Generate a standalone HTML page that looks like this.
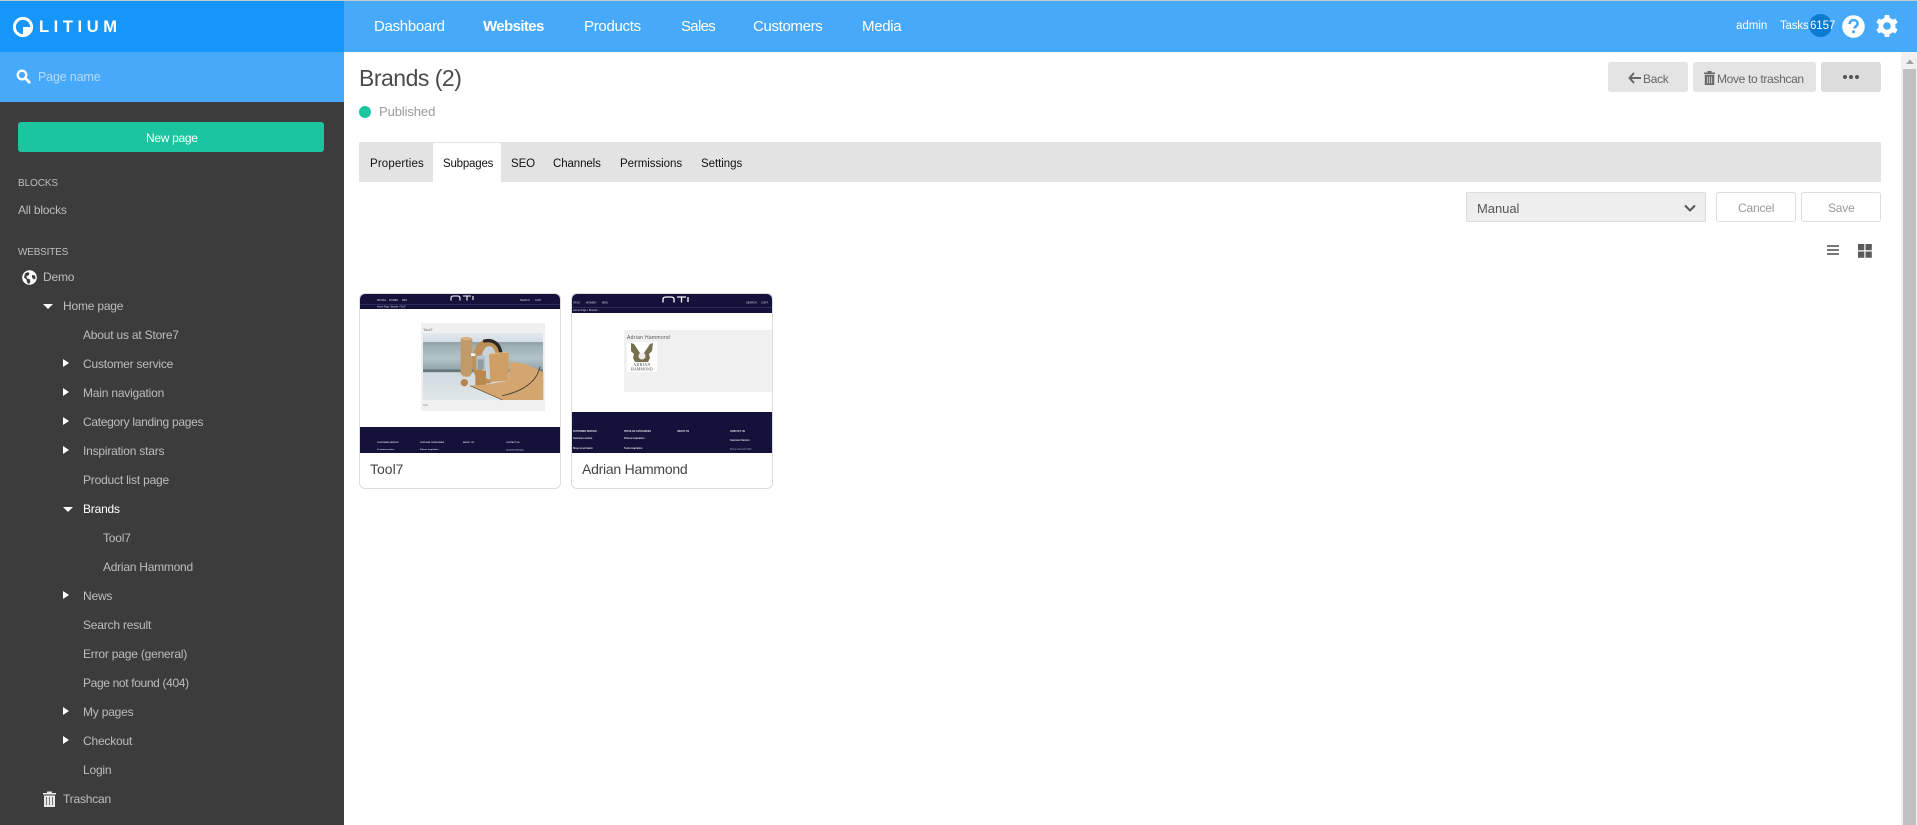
<!DOCTYPE html>
<html><head><meta charset="utf-8"><title>Brands</title>
<style>
html,body{margin:0;padding:0;width:1917px;height:825px;overflow:hidden;background:#fff;font-family:"Liberation Sans",sans-serif}
.a{position:absolute}
.t{position:absolute;white-space:nowrap;line-height:20px;height:20px}
.n{color:#fff;font-size:15px;top:17px;letter-spacing:-.3px}
.s{color:#bdbdbd;font-size:12px;letter-spacing:-.2px}
.tab{color:#111;font-size:11.5px;top:154px}
.arr{position:absolute;width:0;height:0;border-top:4.5px solid transparent;border-bottom:4.5px solid transparent;border-left:6px solid #fff}
.dn{position:absolute;width:0;height:0;border-left:5px solid transparent;border-right:5px solid transparent;border-top:5.5px solid #fff}
.btn{position:absolute;border-radius:3px;background:#e4e4e4}
.card{position:absolute;top:293px;height:194px;border:1px solid #ddd;border-radius:6px;background:#fff;overflow:hidden}
.th{display:block;position:absolute;left:0;top:-1px;filter:blur(.35px)}
</style></head>
<body>
<div class="a" style="left:0;top:0;width:1917px;height:1px;background:#c4c8cc"></div>
<div class="a" style="left:0;top:1px;width:1917px;height:51px;background:#47a9fa"></div>
<div class="a" style="left:0;top:1px;width:344px;height:51px;background:#1796f9"></div>
<div class="a" style="left:0;top:52px;width:344px;height:50px;background:#47a9fa"></div>
<div class="a" style="left:0;top:102px;width:344px;height:723px;background:#3c3c3c"></div>

<svg class="a" style="left:12px;top:16px" width="24" height="22" viewBox="0 0 24 22"><circle cx="11" cy="11" r="8.6" fill="none" stroke="#fff" stroke-width="3"/><path d="M11 11h9a9 9 0 0 1-9 9z" fill="#fff"/></svg>
<div class="t" style="left:39px;top:17px;color:#fff;font-size:16.5px;font-weight:bold;letter-spacing:4.6px">LITIUM</div>

<div class="t n" style="left:374px">Dashboard</div>
<div class="t n" style="left:483px;font-weight:bold;letter-spacing:-.6px">Websites</div>
<div class="t n" style="left:584px">Products</div>
<div class="t n" style="left:681px;letter-spacing:-.7px">Sales</div>
<div class="t n" style="left:753px;letter-spacing:-.35px">Customers</div>
<div class="t n" style="left:862px">Media</div>

<div class="t" style="left:1736px;top:16px;color:#fff;font-size:11.5px">admin</div>
<div class="t" style="left:1780px;top:16px;color:#fff;font-size:11.5px;letter-spacing:-.2px">Tasks</div>
<div class="a" style="left:1809px;top:14px;width:23px;height:23px;border-radius:50%;background:#0a7bd0"></div>
<div class="t" style="left:1810px;top:16px;color:#fff;font-size:11.5px;letter-spacing:-.1px">6157</div>
<svg class="a" style="left:1842px;top:15px" width="23" height="23" viewBox="0 0 23 23"><circle cx="11.5" cy="11.5" r="11.3" fill="#fff"/><path d="M7.6 9c.2-2.600 2-3.900 4-3.900 2.300 0 4 1.500 4 3.500 0 2.600-3.100 2.700-3.100 4.900" fill="none" stroke="#47a9fa" stroke-width="2.600"/><rect x="10.200" y="15.400" width="2.800" height="2.800" fill="#47a9fa"/></svg>
<svg class="a" style="left:1875px;top:14px" width="24" height="24" viewBox="0 0 24 24"><g fill="#fff"><circle cx="12" cy="12" r="8.500"/><rect x="9.500" y="1" width="5" height="22" rx="1"/><rect x="9.500" y="1" width="5" height="22" rx="1" transform="rotate(60 12 12)"/><rect x="9.500" y="1" width="5" height="22" rx="1" transform="rotate(120 12 12)"/></g><circle cx="12" cy="12" r="3.800" fill="#47a9fa"/></svg>

<svg class="a" style="left:16px;top:69px" width="15" height="15" viewBox="0 0 15 15"><circle cx="6" cy="6" r="4.300" fill="none" stroke="#fff" stroke-width="2.300"/><path d="M9.300 9.300l4 4" stroke="#fff" stroke-width="2.800" stroke-linecap="round"/></svg>
<div class="t" style="left:38px;top:67px;color:#b4dafc;font-size:12.5px;letter-spacing:-.15px">Page name</div>

<div class="a" style="left:18px;top:122px;width:306px;height:30px;border-radius:3px;background:#1bc5a0"></div>
<div class="t" style="left:146px;top:128px;color:#fff;font-size:12px;letter-spacing:-.3px">New page</div>
<div class="t" style="left:18px;top:174px;color:#bdbdbd;font-size:10px;letter-spacing:-.1px">BLOCKS</div>
<div class="t s" style="left:18px;top:200px">All blocks</div>
<div class="t" style="left:18px;top:243px;color:#bdbdbd;font-size:10px;letter-spacing:-.2px">WEBSITES</div>

<svg class="a" style="left:22px;top:270px" width="15" height="15" viewBox="0 0 15 15"><circle cx="7.500" cy="7.500" r="7.300" fill="#fff"/><path d="M3 3.500l3-1.500 1.500 1.500-1 2-2 .5.500 2.500 2.500.5 1 2.500-1.500 2.500-2-1.500-.5-3-2.500-2zM10 5l3 .5.500 3-1.500 1-2-2z" fill="#3c3c3c"/></svg>
<div class="t s" style="left:43px;top:267px">Demo</div>
<div class="dn" style="left:43px;top:304px"></div>
<div class="t s" style="left:63px;top:296px">Home page</div>
<div class="t s" style="left:83px;top:325px">About us at Store7</div>
<div class="arr" style="left:63px;top:359px"></div>
<div class="t s" style="left:83px;top:354px">Customer service</div>
<div class="arr" style="left:63px;top:388px"></div>
<div class="t s" style="left:83px;top:383px">Main navigation</div>
<div class="arr" style="left:63px;top:417px"></div>
<div class="t s" style="left:83px;top:412px;letter-spacing:-.3px">Category landing pages</div>
<div class="arr" style="left:63px;top:446px"></div>
<div class="t s" style="left:83px;top:441px">Inspiration stars</div>
<div class="t s" style="left:83px;top:470px">Product list page</div>
<div class="dn" style="left:63px;top:507px"></div>
<div class="t s" style="left:83px;top:499px;color:#fff">Brands</div>
<div class="t s" style="left:103px;top:528px">Tool7</div>
<div class="t s" style="left:103px;top:557px;letter-spacing:-.25px">Adrian Hammond</div>
<div class="arr" style="left:63px;top:591px"></div>
<div class="t s" style="left:83px;top:586px">News</div>
<div class="t s" style="left:83px;top:615px">Search result</div>
<div class="t s" style="left:83px;top:644px">Error page (general)</div>
<div class="t s" style="left:83px;top:673px;letter-spacing:-.35px">Page not found (404)</div>
<div class="arr" style="left:63px;top:707px"></div>
<div class="t s" style="left:83px;top:702px">My pages</div>
<div class="arr" style="left:63px;top:736px"></div>
<div class="t s" style="left:83px;top:731px">Checkout</div>
<div class="t s" style="left:83px;top:760px">Login</div>
<svg class="a" style="left:43px;top:791px" width="13" height="16" viewBox="0 0 13 16"><path d="M0 2h13v1.500H0zM4 .5h5V2H4zM1 4.500h11V16H1z" fill="#e8e8e8"/><path d="M3.500 6v8M6.500 6v8M9.500 6v8" stroke="#777" stroke-width="1"/></svg>
<div class="t s" style="left:63px;top:789px">Trashcan</div>

<div class="t" style="left:359px;top:65px;color:#4a4a4a;font-size:23px;line-height:26px;height:26px;letter-spacing:-.5px">Brands (2)</div>
<div class="a" style="left:359px;top:106px;width:12px;height:12px;border-radius:50%;background:#1bc5a0"></div>
<div class="t" style="left:379px;top:102px;color:#9a9a9a;font-size:13px;letter-spacing:-.1px">Published</div>

<div class="btn" style="left:1608px;top:62px;width:80px;height:30px"></div>
<svg class="a" style="left:1628px;top:72px" width="13" height="12" viewBox="0 0 13 12"><path d="M6 1L1.500 6 6 11M2 6h11" fill="none" stroke="#666" stroke-width="2"/></svg>
<div class="t" style="left:1643px;top:69px;color:#666;font-size:12px;letter-spacing:-.3px">Back</div>
<div class="btn" style="left:1693px;top:62px;width:123px;height:30px"></div>
<svg class="a" style="left:1704px;top:71px" width="11" height="14" viewBox="0 0 11 14"><path d="M0 1.500h11V3H0zM3.500 0h4v1.500h-4zM.8 3.800h9.400V14H.8z" fill="#666"/><path d="M3.300 5.500v7M5.500 5.500v7M7.700 5.500v7" stroke="#e4e4e4" stroke-width=".8"/></svg>
<div class="t" style="left:1717px;top:69px;color:#666;font-size:12px;letter-spacing:-.33px">Move to trashcan</div>
<div class="btn" style="left:1821px;top:62px;width:60px;height:30px;background:#dcdcdc"></div>
<div class="a" style="left:1843px;top:75px;width:4px;height:4px;border-radius:50%;background:#555"></div>
<div class="a" style="left:1849px;top:75px;width:4px;height:4px;border-radius:50%;background:#555"></div>
<div class="a" style="left:1855px;top:75px;width:4px;height:4px;border-radius:50%;background:#555"></div>

<div class="a" style="left:359px;top:142px;width:1522px;height:40px;background:#e3e3e3;border-radius:2px 2px 0 0"></div>
<div class="a" style="left:433px;top:143px;width:68px;height:39px;background:#fff;border-radius:2px 2px 0 0"></div>
<div class="t tab" style="left:370px;letter-spacing:.15px">Properties</div>
<div class="t tab" style="left:443px;letter-spacing:-.2px">Subpages</div>
<div class="t tab" style="left:511px;letter-spacing:-.1px">SEO</div>
<div class="t tab" style="left:553px;letter-spacing:-.1px">Channels</div>
<div class="t tab" style="left:620px;letter-spacing:-.05px">Permissions</div>
<div class="t tab" style="left:701px;letter-spacing:-.05px">Settings</div>

<div class="a" style="left:1466px;top:192px;width:238px;height:28px;background:#eee;border:1px solid #ddd;border-radius:2px"></div>
<div class="t" style="left:1477px;top:199px;color:#555;font-size:13px;letter-spacing:-.05px">Manual</div>
<svg class="a" style="left:1684px;top:204px" width="12" height="9" viewBox="0 0 12 9"><path d="M1 1.500l5 5 5-5" fill="none" stroke="#555" stroke-width="2"/></svg>
<div class="a" style="left:1716px;top:192px;width:78px;height:28px;border:1px solid #ddd;border-radius:3px"></div>
<div class="t" style="left:1738px;top:198px;color:#999;font-size:12px;letter-spacing:-.2px">Cancel</div>
<div class="a" style="left:1801px;top:192px;width:78px;height:28px;border:1px solid #ddd;border-radius:3px"></div>
<div class="t" style="left:1828px;top:198px;color:#999;font-size:12px;letter-spacing:-.2px">Save</div>
<svg class="a" style="left:1827px;top:244px" width="12" height="12" viewBox="0 0 12 12"><path d="M0 2h12M0 6h12M0 10h12" stroke="#666" stroke-width="1.800"/></svg>
<svg class="a" style="left:1858px;top:244px" width="14" height="14" viewBox="0 0 14 14"><path d="M0 0h6.300v6.300H0zM7.500 0h6.300v6.300H7.500zM0 7.500h6.300v6.300H0zM7.500 7.500h6.300v6.300H7.500z" fill="#5a5a5a"/></svg>

<div class="card" style="left:359px;width:200px">
<svg class="th" width="201" height="160" viewBox="360 293 201 160">
<defs><linearGradient id="sky" x1="0" y1="0" x2="0" y2="1"><stop offset="0" stop-color="#e2e8ee"/><stop offset=".13" stop-color="#d5dee4"/><stop offset=".14" stop-color="#8d9ea2"/><stop offset=".19" stop-color="#9db0b4"/><stop offset=".38" stop-color="#b2c4c8"/><stop offset=".54" stop-color="#93a6aa"/><stop offset=".55" stop-color="#5f6f70"/><stop offset=".58" stop-color="#6b7a7b"/><stop offset=".59" stop-color="#cfdae0"/><stop offset="1" stop-color="#e0e7ea"/></linearGradient></defs>
<rect x="360" y="293" width="201" height="160" fill="#fff"/>
<rect x="360" y="293" width="201" height="16" fill="#14123a"/>
<rect x="360" y="304" width="201" height=".7" fill="#3a3966"/>
<g font-size="2.300" fill="#d6d6e4" font-family="Liberation Sans"><text x="377" y="301">PEOPLE</text><text x="389" y="301">WOMEN</text><text x="402" y="301">MEN</text><text x="377" y="307.500">Home Page / Brands / Tool7</text><text x="520" y="301">SEARCH</text><text x="535" y="301">CART</text></g>
<path d="M451 300.500v-2.500q0-2 2.500-2h4q2.500 0 2.500 2v2.500M463 296h8M467 296v4.500M473 296v4" fill="none" stroke="#fff" stroke-width="1.100"/>
<rect x="421" y="323" width="124" height="88" fill="#f0f0f0"/>
<text x="423" y="331" font-size="4" fill="#666" font-family="Liberation Sans">Tool7</text>
<text x="423" y="406" font-size="2.500" fill="#777" font-family="Liberation Sans">Tool</text>
<rect x="423" y="333" width="120" height="67" fill="url(#sky)"/>
<g transform="translate(415 320) scale(.3333)">
<path d="M137 58q18-10 35 0l0 100-8 12h-18l-9-8z" fill="#c29a68"/>
<ellipse cx="154" cy="56" rx="17" ry="5" fill="#d7b27f"/>
<ellipse cx="215" cy="125" rx="44" ry="66" fill="#bd8f5a"/>
<path d="M205 64q28-8 44 12 10 14 9 34" fill="none" stroke="#2c2826" stroke-width="10"/>
<ellipse cx="222" cy="128" rx="24" ry="50" fill="#c7d3d9"/>
<path d="M184 108l26-4 3 44h-29z" fill="#b7c4cb"/>
<rect x="188" y="118" width="18" height="30" fill="#8f9da5"/>
<rect x="168" y="100" width="13" height="8" fill="#f4f4f4"/>
<path d="M181 153q16-6 32 0v42l-6 6h-20l-6-6z" fill="#bb8850"/>
<path d="M222 104l59-6v84l-55 4z" fill="#cf9f66"/>
<path d="M222 104l59-6-2-3-56 5z" fill="#e0b67f"/>
<path d="M165 197l46-3 70-12 4-58 45 8 55 24v84H262z" fill="#d3a66f"/>
<path d="M375 140q-6 30-30 50-30 26-83 37" fill="none" stroke="#3c3530" stroke-width="2.500"/>
<path d="M165 197l97 43" stroke="#5e4a33" stroke-width="2"/>
<circle cx="148" cy="188" r="11" fill="#b8834d"/>
</g>
<rect x="360" y="427" width="201" height="26" fill="#14123a"/>
<g font-size="2.100" fill="#d8d8e6" font-family="Liberation Sans" font-weight="bold"><text x="377" y="443">CUSTOMER SERVICE</text><text x="420" y="443">POPULAR CATEGORIES</text><text x="463" y="443">ABOUT US</text><text x="506" y="443">CONTACT US</text><text x="377" y="450">Customer service</text><text x="420" y="450">Fitness inspiration</text><text x="506" y="450.500">Customer Service</text></g>
</svg>
<div class="t" style="left:10px;top:165px;color:#444;font-size:14px">Tool7</div>
</div>

<div class="card" style="left:571px;width:200px">
<svg class="th" width="201" height="160" viewBox="571 293 201 160">
<rect x="571" y="293" width="201" height="160" fill="#fff"/>
<rect x="571" y="293" width="201" height="20" fill="#14123a"/>
<rect x="571" y="307" width="201" height=".7" fill="#3a3966"/>
<g font-size="2.600" fill="#d6d6e4" font-family="Liberation Sans"><text x="572" y="303.500">OPLE</text><text x="585" y="303.500">WOMEN</text><text x="601" y="303.500">MEN</text><text x="572" y="311">Home Page / Brands /</text><text x="745" y="303.500">SEARCH</text><text x="760" y="303.500">CART</text></g>
<path d="M662 302.500v-3q0-2.500 3-2.500h5q3 0 3 2.500v3M676 297h9M680.500 297v5.500M687 297v5" fill="none" stroke="#fff" stroke-width="1.300"/>
<rect x="623" y="330" width="149" height="62" fill="#f0f0f0"/>
<text x="626" y="339" font-size="5" fill="#555" font-family="Liberation Sans" letter-spacing=".3">Adrian  Hammond</text>
<rect x="626" y="342" width="30" height="30" fill="#fff"/>
<path d="M630 343l3 1 6 9h4l6-9 3-1-1 8-3 3 1 4-2 4h-13l-2-4 1-4-3-3z" fill="#77704f"/>
<circle cx="641" cy="356" r="3.500" fill="#eee"/>
<text x="641" y="366" font-size="3.700" text-anchor="middle" fill="#333" font-family="Liberation Serif" letter-spacing=".5">ADRIAN</text>
<text x="641" y="370.500" font-size="3.700" text-anchor="middle" fill="#333" font-family="Liberation Serif" letter-spacing=".3">HAMMOND</text>
<rect x="571" y="412" width="201" height="41" fill="#14123a"/>
<g font-size="2.300" fill="#e0e0ea" font-family="Liberation Sans" font-weight="bold"><text x="572" y="432">CUSTOMER SERVICE</text><text x="623" y="432">POPULAR CATEGORIES</text><text x="676" y="432">ABOUT US</text><text x="729" y="432">CONTACT US</text><text x="572" y="439">Customer service</text><text x="623" y="439">Fitness inspiration</text><text x="729" y="441">Customer Service</text><text x="572" y="449">Shop on-air talent</text><text x="623" y="449">Tools inspiration</text><text x="729" y="450" font-weight="normal" fill="#a0a0b8">Phone 031-123 4420</text></g>
</svg>
<div class="t" style="left:10px;top:165px;color:#444;font-size:14px;letter-spacing:-.25px">Adrian Hammond</div>
</div>

<div class="a" style="left:1901px;top:52px;width:16px;height:773px;background:#f1f1f1"></div>
<div class="a" style="left:1903px;top:69px;width:13px;height:756px;background:#c1c1c1"></div>
<svg class="a" style="left:1903px;top:57px" width="14" height="8" viewBox="0 0 14 8"><path d="M3 7l4-4.500L11 7z" fill="#a3a3a3"/></svg>
</body></html>
